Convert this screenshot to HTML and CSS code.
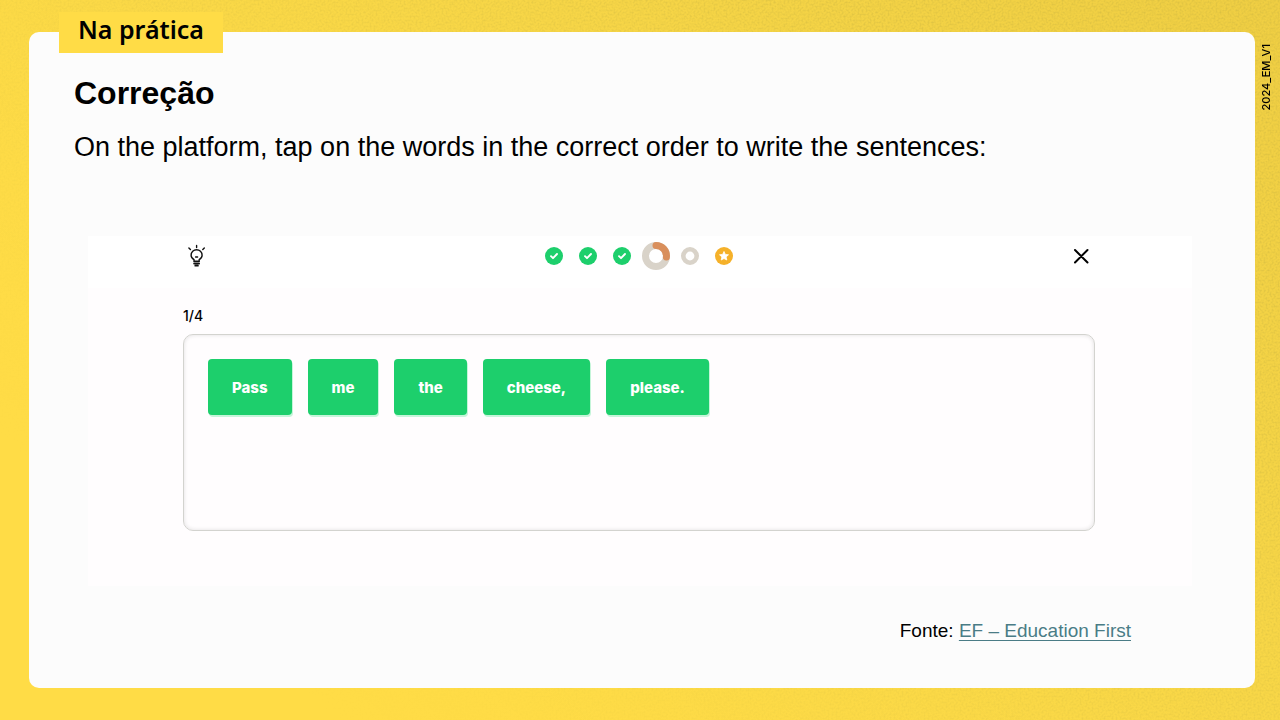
FILE: index.html
```html
<!DOCTYPE html>
<html lang="pt-BR">
<head>
    <meta charset="UTF-8">
    <meta name="viewport" content="width=device-width, initial-scale=1.0">
    <title>Na prática - Correção</title>
    <link rel="stylesheet" href="styles.css">
</head>
<body>
    <!-- Paper grain over the yellow background -->
    <svg class="grain" aria-hidden="true">
        <filter id="noise" x="0" y="0" width="100%" height="100%">
            <feTurbulence type="fractalNoise" baseFrequency="0.5" numOctaves="2" stitchTiles="stitch"/>
            <feColorMatrix values="0 0 0 0 0.5  0 0 0 0 0.4  0 0 0 0 0.05  2 0 0 0 -0.8"/>
        </filter>
        <rect width="100%" height="100%" filter="url(#noise)"/>
    </svg>

    <main class="slide">
        <div class="tag">Na prática</div>
        <div class="version">2024_EM_V1</div>

        <h1>Correção</h1>
        <p class="intro">On the platform, tap on the words in the correct order to write the sentences:</p>

        <section class="activity">
            <header class="toolbar">
                <button class="icon-button" type="button" aria-label="Hint">
                    <svg width="20" height="24" viewBox="0 0 20 24" fill="none" stroke="#111" stroke-width="1.4" stroke-linecap="round">
                        <path d="M8 17.3v-1.6C6.3 14.700 5.100 13.100 5.100 11.200a5.500 5.500 0 0 1 11 0c0 1.900-1.200 3.500-2.900 4.500v1.600z"/>
                        <path d="M10.600 1.500v2M2.900 4l1.500 1.500M18.300 4l-1.500 1.500M9.600 13h2"/>
                        <path d="M8.100 19.500h5M9.300 21.700h2.600" stroke-width="1.800"/>
                    </svg>
                </button>

                <div class="steps">
                    <svg width="18" height="18" viewBox="0 0 18 18"><circle cx="9" cy="9" r="9" fill="#1dcf6c"/><path d="M6 9.200l2 2 4-4.200" fill="none" stroke="#fff" stroke-width="1.900" stroke-linecap="round" stroke-linejoin="round"/></svg>
                    <svg width="18" height="18" viewBox="0 0 18 18"><circle cx="9" cy="9" r="9" fill="#1dcf6c"/><path d="M6 9.200l2 2 4-4.200" fill="none" stroke="#fff" stroke-width="1.900" stroke-linecap="round" stroke-linejoin="round"/></svg>
                    <svg width="18" height="18" viewBox="0 0 18 18"><circle cx="9" cy="9" r="9" fill="#1dcf6c"/><path d="M6 9.200l2 2 4-4.200" fill="none" stroke="#fff" stroke-width="1.900" stroke-linecap="round" stroke-linejoin="round"/></svg>
                    <svg class="current" width="28" height="28" viewBox="0 0 28 28" fill="none" stroke-width="7">
                        <circle cx="14" cy="14" r="10.500" stroke="#d9d3c9"/>
                        <path d="M14 3.500A10.500 10.500 0 0 1 24.400 15" stroke="#d98f5c" stroke-linecap="round"/>
                    </svg>
                    <svg width="18" height="18" viewBox="0 0 18 18"><circle cx="9" cy="9" r="6.700" fill="none" stroke="#d9d3c9" stroke-width="4.600"/></svg>
                    <svg width="18" height="18" viewBox="0 0 18 18"><circle cx="9" cy="9" r="9" fill="#f5b12a"/><path d="M9 4.500l1.300 2.900 3.200.4-2.400 2.100.7 3.100L9 11.500 6.200 13l.7-3.100-2.400-2.100 3.200-.4z" fill="#fff" stroke="#fff" stroke-width=".8" stroke-linejoin="round"/></svg>
                </div>

                <button class="icon-button" type="button" aria-label="Close">
                    <svg width="20" height="20" viewBox="0 0 20 20" fill="none" stroke="#000" stroke-width="2" stroke-linecap="round"><path d="M3 4l12.500 12.500M15.500 4L3 16.500"/></svg>
                </button>
            </header>

            <div class="exercise">
                <div class="counter">1/4</div>
                <div class="answer">
                    <button class="word" type="button">Pass</button>
                    <button class="word" type="button">me</button>
                    <button class="word" type="button">the</button>
                    <button class="word" type="button">cheese,</button>
                    <button class="word" type="button">please.</button>
                </div>
            </div>
        </section>

        <p class="source">Fonte: <a href="#">EF – Education First</a></p>
    </main>
</body>
</html>
```
FILE: styles.css
```css
* {
    box-sizing: border-box;
}
body {
    margin: 0;
    padding: 32px 25px 32px 29px;
    min-height: 100vh;
    display: flex;
    font-family: "Liberation Sans", Arial, sans-serif;
    color: #000;
    background: linear-gradient(40deg, #ffdc46 25%, #f7d647 65%, #efce43 100%);
}
.grain {
    position: absolute;
    top: 0;
    left: 0;
    width: 100%;
    height: 100%;
    opacity: 0.4;
    mask-image: linear-gradient(40deg, transparent 15%, #000 80%);
}
.slide {
    position: relative;
    flex: 1;
    padding: 42px 63px 40px 45px;
    background: #fcfcfc;
    border-radius: 10px;
}
.tag {
    position: absolute;
    top: -20px;
    left: 30px;
    padding: 0 19px 6px;
    background: #ffdc46;
    font-family: "Noto Sans", sans-serif;
    font-size: 25px;
    font-weight: 600;
    line-height: 35px;
}
.version {
    position: absolute;
    top: 12px;
    left: 100%;
    margin-left: 3px;
    writing-mode: vertical-rl;
    transform: rotate(180deg);
    font-family: Inter, sans-serif;
    font-size: 11px;
    font-weight: 500;
    line-height: 16px;
}
h1 {
    margin: 0;
    font-size: 32px;
    line-height: 38px;
}
.intro {
    margin: 16px 0 0;
    font-size: 27px;
    line-height: 38px;
}
.activity {
    margin: 70px 0 0 14px;
    background: #fffdfe;
}
.toolbar {
    display: grid;
    grid-template-columns: 1fr auto 1fr;
    align-items: center;
    height: 52px;
    padding: 0 100px 12px 98px;
    background: #fff;
}
.icon-button {
    display: flex;
    justify-self: start;
    padding: 0;
    border: none;
    background: none;
    cursor: pointer;
}
.icon-button:last-child {
    justify-self: end;
}
.steps {
    display: flex;
    align-items: center;
    gap: 16px;
}
.steps .current {
    margin: 0 -5px;
}
.exercise {
    padding: 20px 97px 55px 95px;
}
.counter {
    font-family: Inter, sans-serif;
    font-size: 14px;
    font-weight: 500;
    line-height: 16px;
}
.answer {
    display: flex;
    align-items: flex-start;
    gap: 16px;
    min-height: 197px;
    margin-top: 10px;
    padding: 24px;
    border: 1px solid #d3d3cf;
    border-radius: 10px;
    box-shadow: inset 0 0 4px rgba(0, 0, 0, 0.12);
}
.word {
    height: 56px;
    padding: 0 24px;
    border: none;
    border-radius: 4px;
    background: #1dcf6c;
    box-shadow: 1px 2px 0 #c5f5d9;
    color: #fff;
    font-family: Inter, sans-serif;
    font-size: 15px;
    font-weight: 800;
    cursor: pointer;
}
.source {
    margin: 34px 61px 0 0;
    font-size: 19px;
    line-height: 22px;
    text-align: right;
}
.source a {
    color: #4a7c86;
    text-underline-offset: 3px;
}
```
